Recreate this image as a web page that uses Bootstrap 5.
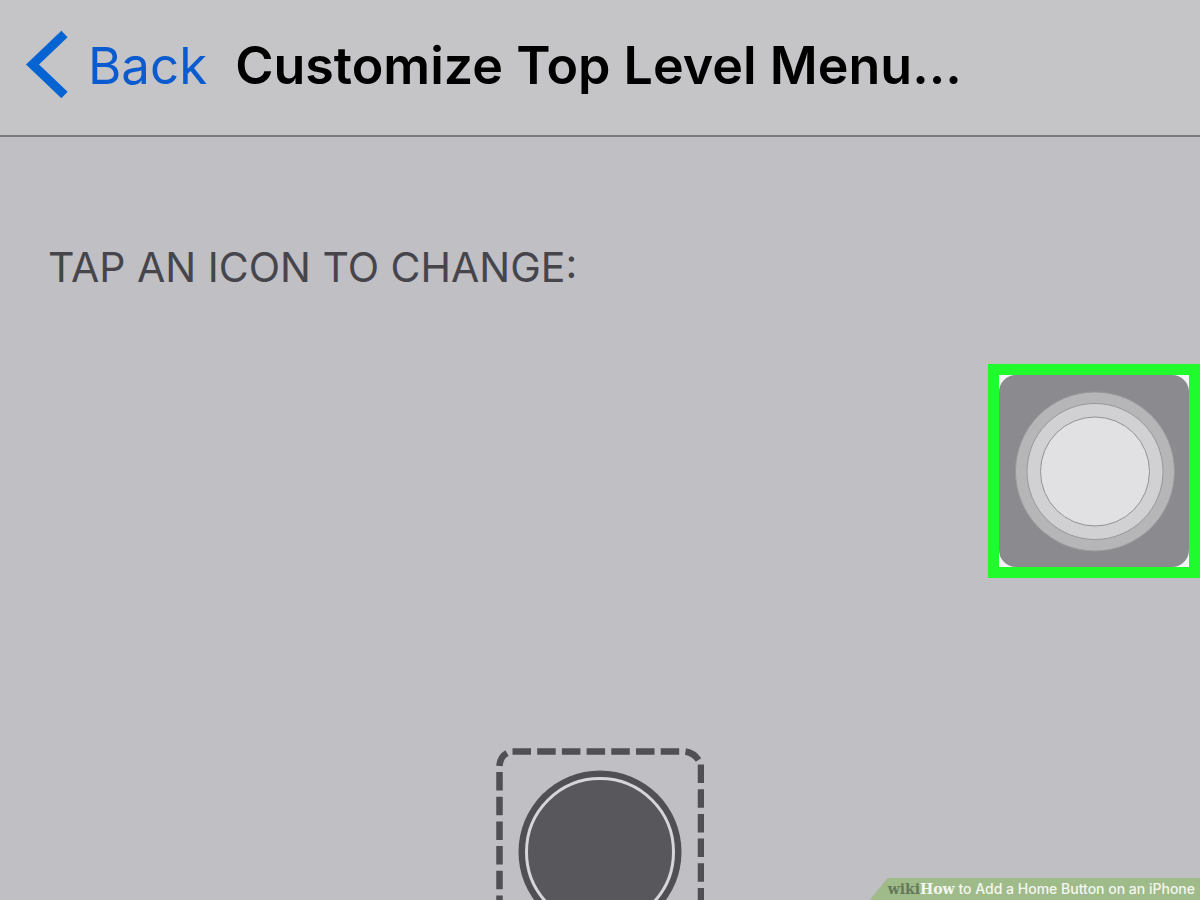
<!DOCTYPE html>
<html lang="en">
<head>
<meta charset="utf-8">
<meta name="viewport" content="width=device-width, initial-scale=1">
<title>Customize Top Level Menu</title>
<link href="https://cdn.jsdelivr.net/npm/bootstrap@5.3.0/dist/css/bootstrap.min.css" rel="stylesheet">
<style>
  body { background: #c0bfc4; font-family: Inter, "Liberation Sans", sans-serif; color: #000; }
  .screen { height: 100vh; }
  .topbar { background: #c5c5c7; border-bottom: 2px solid #7b7b7e; padding: 30px 24px 34px 26px; }
  .back-link { color: #0a5bd0; font-size: 51px; line-height: 71px; gap: 20px; margin-right: 28px; }
  .back-link:hover { color: #0848a8; }
  .page-title { font-size: 52px; line-height: 71px; font-weight: 600; }
  .content { padding-top: 106px; }
  .hint { font-size: 41px; line-height: 48px; font-weight: 400; color: #46454b; padding-left: 48px; margin-bottom: 73px; }
  .assist { background: #f4f4f6; border: 11px solid #20fb2c; margin-bottom: 170px; }
  .credit { background: #a0bb8a; color: #f4f7f1; height: 22px; padding: 0 5px 0 18px; font-size: 14px; line-height: 22px; font-weight: 500; clip-path: polygon(18px 0, 100% 0, 100% 100%, 0 100%); }
  .brand { font-family: "DejaVu Serif", serif; font-size: 14px; font-weight: 700; }
  .brand-wiki { color: #66785c; }
</style>
</head>
<body>
<div class="screen d-flex flex-column position-relative overflow-hidden">
  <header class="topbar d-flex align-items-center flex-shrink-0">
    <a href="#" class="back-link d-flex text-decoration-none flex-shrink-0">
      <svg width="42" height="68" viewBox="0 0 42 68" aria-hidden="true"><path d="M38.500 4 6.500 34.500 38.500 65" fill="none" stroke="#0663d2" stroke-width="9"/></svg>
      <span>Back</span>
    </a>
    <h1 class="page-title m-0 text-truncate">Customize Top Level Menu...</h1>
  </header>

  <main class="content d-flex flex-column">
    <p class="hint">TAP AN ICON TO CHANGE:</p>

    <button type="button" class="assist align-self-end p-0 d-block" aria-label="AssistiveTouch">
      <svg class="d-block" width="190" height="192" viewBox="0 0 190 192" aria-hidden="true">
        <rect width="190" height="192" rx="17" fill="#8b8a8f"/>
        <circle cx="96" cy="96.500" r="79.500" fill="#b6b6b8" stroke="#98989b"/>
        <circle cx="96" cy="96.500" r="68" fill="#d1d1d3" stroke="#98989b"/>
        <circle cx="96" cy="96.500" r="54.500" fill="#e1e1e3" stroke="#929295"/>
      </svg>
    </button>

    <button type="button" class="btn p-0 border-0 rounded-0 align-self-center" aria-label="Change icon">
      <svg class="d-block" width="208" height="208" viewBox="0 0 208 208" aria-hidden="true">
        <g fill="none" stroke="#504f54" stroke-width="6.500" stroke-dasharray="18.500 6.200">
          <path d="M16.500 3.500H188"/>
          <path d="M205 16.500V188"/>
          <path d="M3.500 24V188"/>
          <path d="M16.500 204.500H188"/>
        </g>
        <g fill="none" stroke="#504f54" stroke-width="6.500">
          <path d="M3.500 18Q4 9 11 5"/>
          <path d="M189.500 3.500Q198 5 202.500 12"/>
          <path d="M3.500 190Q4 199 12 203"/>
          <path d="M190 204.500Q200 204 204 194"/>
        </g>
        <circle cx="104" cy="104" r="81.500" fill="#504f54"/>
        <circle cx="104" cy="104" r="73.500" fill="#58575c" stroke="#d6d5d9" stroke-width="3"/>
      </svg>
    </button>
  </main>

  <footer class="credit position-absolute bottom-0 end-0 text-nowrap"><span class="brand"><span class="brand-wiki">wiki</span>How</span> to Add a Home Button on an iPhone</footer>
</div>
<script src="https://cdn.jsdelivr.net/npm/bootstrap@5.3.0/dist/js/bootstrap.bundle.min.js"></script>
</body>
</html>
